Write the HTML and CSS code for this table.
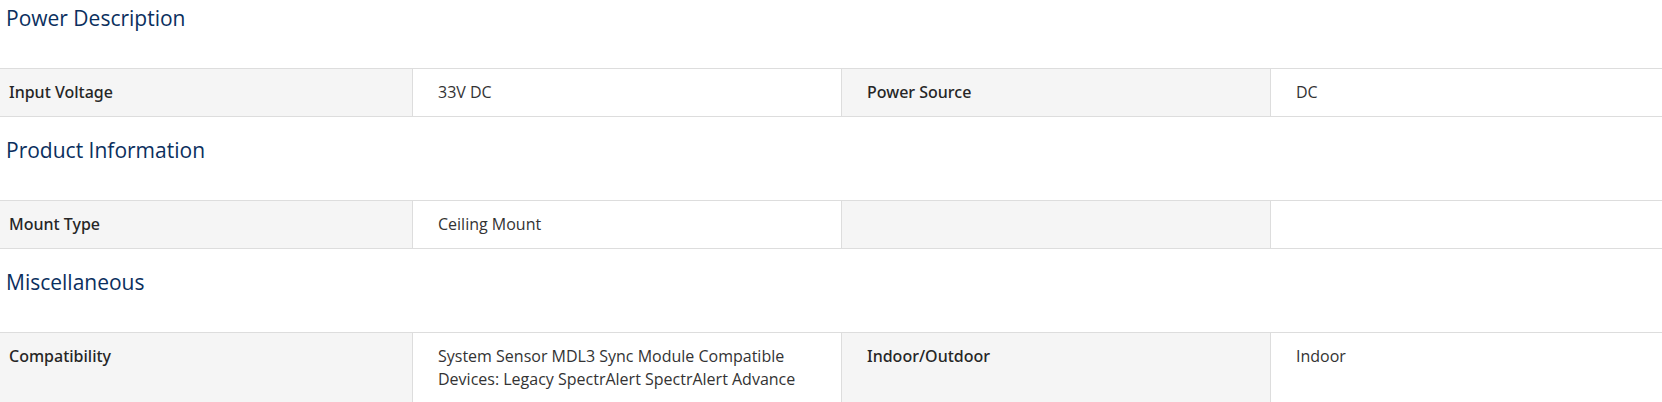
FILE: index.html
```html
<!DOCTYPE html>
<html lang="en">
<head>
<meta charset="utf-8">
<title>Specifications</title>
<link rel="stylesheet" href="styles.css">
</head>
<body>
<div class="specs">
  <section class="spec-section">
    <h2 class="spec-title">Power Description</h2>
    <table class="spec-table">
      <colgroup><col><col><col><col></colgroup>
      <tr>
        <th>Input Voltage</th>
        <td>33V DC</td>
        <th>Power Source</th>
        <td>DC</td>
      </tr>
    </table>
  </section>
  <section class="spec-section">
    <h2 class="spec-title">Product Information</h2>
    <table class="spec-table">
      <colgroup><col><col><col><col></colgroup>
      <tr>
        <th>Mount Type</th>
        <td>Ceiling Mount</td>
        <th></th>
        <td></td>
      </tr>
    </table>
  </section>
  <section class="spec-section">
    <h2 class="spec-title">Miscellaneous</h2>
    <table class="spec-table">
      <colgroup><col><col><col><col></colgroup>
      <tr>
        <th>Compatibility</th>
        <td>System Sensor MDL3 Sync Module Compatible Devices: Legacy SpectrAlert SpectrAlert Advance</td>
        <th>Indoor/Outdoor</th>
        <td>Indoor</td>
      </tr>
    </table>
  </section>
</div>
</body>
</html>
```
FILE: styles.css
```css
html, body {
  margin: 0;
  padding: 0;
  overflow: hidden;
  background: #fff;
}
body {
  font-family: "Open Sans", "Noto Sans", sans-serif;
  color: #2b2b2b;
}
.specs {
  display: flex;
  flex-direction: column;
}
.spec-title {
  margin: 18px 0 35px 6px;
  font-size: 21px;
  line-height: 30px;
  font-weight: 400;
  color: #0b2f5e;
}
.spec-section:first-child .spec-title {
  margin-top: 3px;
}
.spec-table {
  border-collapse: collapse;
  table-layout: fixed;
  width: 1716px;
  margin-left: -17px;
}
.spec-table col {
  width: 429px;
}
.spec-table th,
.spec-table td {
  border: 1px solid #dddddd;
  padding: 12px 25px 12px;
  font-size: 16px;
  line-height: 23px;
  text-align: left;
  vertical-align: top;
}
.spec-table th {
  background: #f5f5f5;
  font-family: "Noto Sans", "Open Sans", sans-serif;
  font-weight: 500;
  color: #262626;
}
.spec-table td {
  background: #fff;
  font-weight: 400;
  color: #333;
}
.spec-table td:nth-child(2) {
  padding-right: 20px;
}
```
